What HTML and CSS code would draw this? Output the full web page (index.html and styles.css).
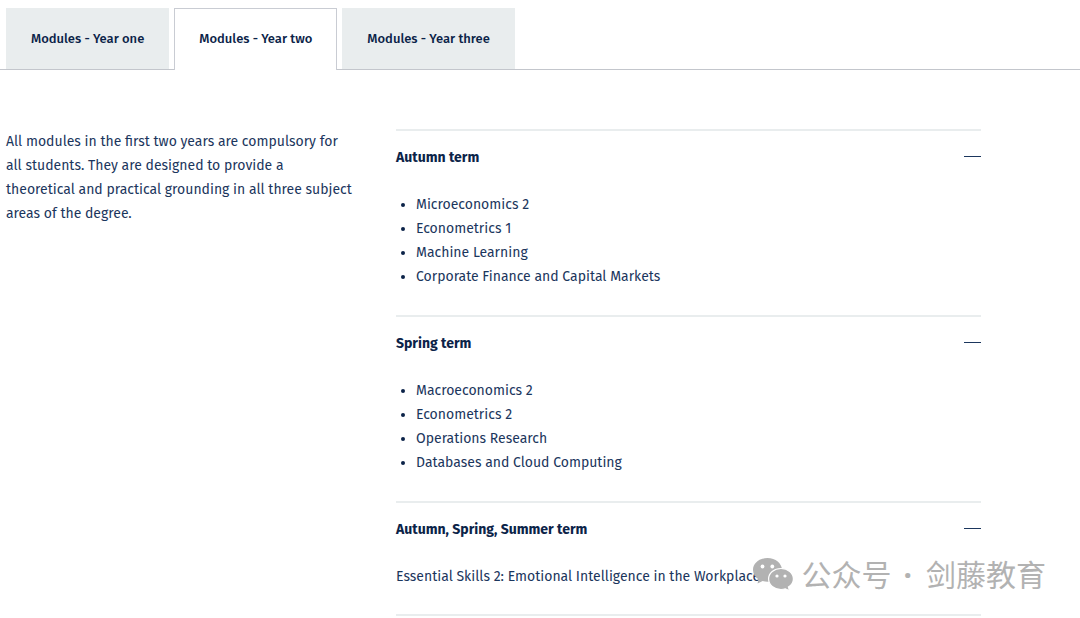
FILE: index.html
```html
<!DOCTYPE html>
<html lang="en">
<head>
  <meta charset="UTF-8" />
  <meta name="viewport" content="width=device-width, initial-scale=1.0"/>
  <title>Modules</title>
  <link rel="stylesheet" href="styles.css">
</head>
<body>
  <div class="tabs" role="tablist">
    <button class="tab" role="tab" aria-selected="false">Modules - Year one</button>
    <button class="tab active" role="tab" aria-selected="true">Modules - Year two</button>
    <button class="tab" role="tab" aria-selected="false">Modules - Year three</button>
  </div>

  <main class="content">
    <p class="intro">All modules in the first two years are compulsory for all students. They are designed to provide a theoretical and practical grounding in all three subject areas of the degree.</p>

    <div class="terms">
      <details class="term" open>
        <summary>Autumn term</summary>
        <ul>
          <li>Microeconomics 2</li>
          <li>Econometrics 1</li>
          <li>Machine Learning</li>
          <li>Corporate Finance and Capital Markets</li>
        </ul>
      </details>
      <details class="term" open>
        <summary>Spring term</summary>
        <ul>
          <li>Macroeconomics 2</li>
          <li>Econometrics 2</li>
          <li>Operations Research</li>
          <li>Databases and Cloud Computing</li>
        </ul>
      </details>
      <details class="term" open>
        <summary>Autumn, Spring, Summer term</summary>
        <p>Essential Skills 2: Emotional Intelligence in the Workplace</p>
      </details>
    </div>
  </main>

  <div class="watermark" lang="zh">
    <svg class="wechat" viewBox="0 0 40 34" aria-hidden="true">
      <path fill="#b2b2b2" d="M14.5 1C6.500 1 0 6.300 0 13c0 3.800 2.100 7.100 5.400 9.300L4.600 26.500l5-2.600c1.600.5 3.200.8 4.900.8C22.500 24.700 29 19.500 29 13S22.500 1 14.500 1z"/>
      <path fill="#b2b2b2" stroke="#fff" stroke-width="1.200" d="M28 11.500c-6.900 0-12.400 4.600-12.400 10.500S21.100 32.500 28 32.500c1.500 0 3-.2 4.300-.7l4.300 2-1.200-3.700c3-1.900 5-4.800 5-8.100 0-5.900-5.500-10.500-12.400-10.500z"/>
      <g fill="#fff">
        <circle cx="9.500" cy="9.500" r="1.900"/>
        <circle cx="19.300" cy="9.500" r="1.900"/>
        <circle cx="24" cy="19" r="1.600"/>
        <circle cx="32" cy="19" r="1.600"/>
      </g>
    </svg>
    <span>公众号<span class="dot">·</span>剑藤教育</span>
  </div>

  <script>
    const tabs = document.querySelectorAll(".tab");
    tabs.forEach(tab => {
      tab.addEventListener("click", () => {
        tabs.forEach(t => {
          t.classList.toggle("active", t === tab);
          t.setAttribute("aria-selected", t === tab);
        });
      });
    });
  </script>
</body>
</html>
```

FILE: styles.css
```css
* {
  box-sizing: border-box;
}
body {
  margin: 0;
  padding-top: 8px;
  font-family: "Fira Sans", Roboto, sans-serif;
  font-size: 14px;
  line-height: 24px;
  color: #1b365d;
  background: #fff;
}
.tabs {
  display: flex;
  gap: 5px;
  padding-left: 6px;
  border-bottom: 1px solid #c3c6cc;
}
.tab {
  padding: 18px 24px;
  border: 1px solid #e9edee;
  border-bottom: 0;
  background: #e9edee;
  color: #0b2348;
  font-family: inherit;
  font-size: 13px;
  font-weight: 500;
  line-height: 24px;
  cursor: pointer;
}
.tab.active {
  margin-bottom: -1px;
  padding-bottom: 19px;
  border-color: #c9ccd3;
  background: #fff;
}
.content {
  display: grid;
  grid-template-columns: 3fr 5fr;
  gap: 39px;
  padding: 59px 99px 0 6px;
}
.intro {
  margin: 0;
  padding: 1px 4px 0 0;
}
.term {
  border-top: 2px solid #e9edee;
  padding-bottom: 26px;
}
.term:last-child {
  padding-bottom: 25px;
  border-bottom: 2px solid #e9edee;
}
.term summary {
  display: flex;
  justify-content: space-between;
  padding: 15px 0 13px;
  color: #0b2348;
  font-weight: bold;
  cursor: pointer;
}
.term summary::after {
  content: "";
  width: 17px;
  height: 1px;
  margin-top: 10px;
  background: #1b365d;
}
.term ul,
.term p {
  margin: 10px 0 0;
}
.term ul {
  padding-left: 20px;
}
.term li::marker {
  color: #0b2348;
}
.watermark {
  position: absolute;
  right: 34px;
  top: 555px;
  display: flex;
  align-items: center;
  gap: 9px;
  font-family: "Noto Sans CJK SC", sans-serif;
  font-size: 30px;
  line-height: 36px;
  color: #b2b2b2;
}
.dot {
  padding: 0 14px 0 12px;
  font-family: "Noto Sans", sans-serif;
  font-weight: bold;
}
.wechat {
  width: 40px;
  height: 34px;
}
```
